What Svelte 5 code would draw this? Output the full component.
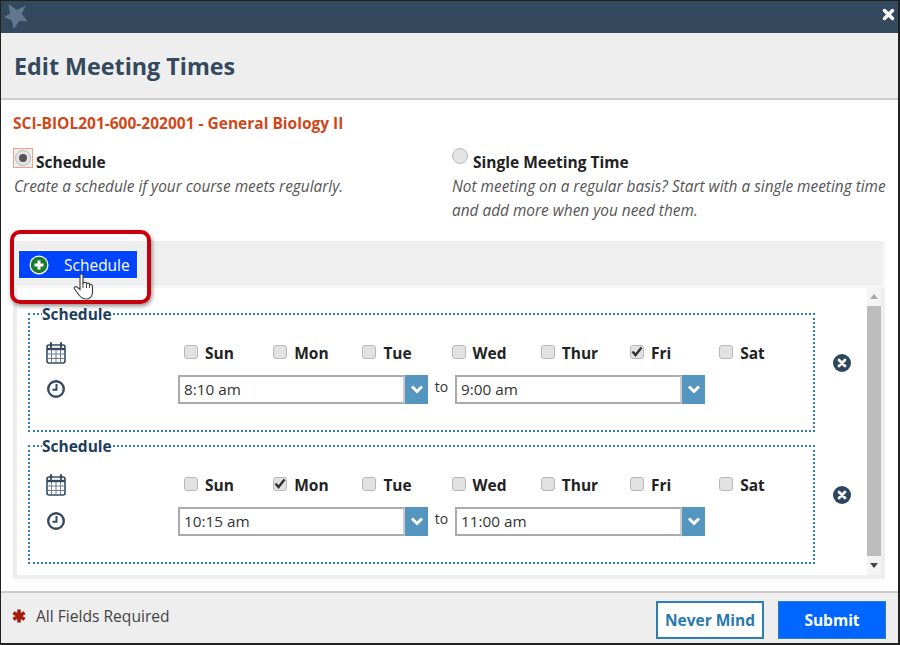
<script>
	const days = ["Sun", "Mon", "Tue", "Wed", "Thur", "Fri", "Sat"];
	const schedules = [
		{ day: "Fri", from: "8:10 am", to: "9:00 am" },
		{ day: "Mon", from: "10:15 am", to: "11:00 am" }
	];
</script>

<div class="frame">
	<div class="topbar">
		<svg class="logo" width="28" height="28" viewBox="0 0 28 28">
			<path d="M7 2 L15 7.500 L23 3.500 L19 11 L25 18 L17 17.500 L12 25 L10 17 L3 14 L8.500 10.500 Z" fill="#64778c" stroke="#64778c" stroke-width="1" stroke-linejoin="round" />
		</svg>
		<svg class="close" width="13" height="13" viewBox="0 0 13 13">
			<path d="M2.5 2.5 L10.5 10.5 M10.5 2.5 L2.5 10.5" stroke="#fff" stroke-width="3.4" stroke-linecap="round" />
		</svg>
	</div>

	<header class="header">
		<h1>Edit Meeting Times</h1>
	</header>

	<main class="content">
		<p class="course">SCI-BIOL201-600-202001 - General Biology II</p>

		<div class="options">
			<div class="option first">
				<div class="option-label">
					<span class="focus-ring"><span class="radio checked"></span></span>
					<b>Schedule</b>
				</div>
				<p class="hint">Create a schedule if your course meets regularly.</p>
			</div>
			<div class="option second">
				<div class="option-label">
					<span class="radio"></span>
					<b>Single Meeting Time</b>
				</div>
				<p class="hint">Not meeting on a regular basis? Start with a single meeting time<br />and add more when you need them.</p>
			</div>
		</div>

		<div class="toolbar">
			<button class="add">
				<svg width="20" height="20" viewBox="0 0 20 20">
					<circle cx="10" cy="10" r="9.500" fill="#fff" />
					<circle cx="10" cy="10" r="8.300" fill="#1c7a2c" />
					<path d="M10 5.500 V14.500 M5.500 10 H14.500" stroke="#fff" stroke-width="3" />
				</svg>
				<span>Schedule</span>
			</button>
		</div>

		<div class="list">
			<div class="rows">
				{#each schedules as s}
					<div class="row">
						<fieldset>
							<legend>Schedule</legend>
							<div class="line days-line">
								<svg class="icon" width="20" height="22" viewBox="0 0 20 22">
									<rect x="1" y="3" width="18" height="18" rx="2" fill="#fff" stroke="#34495e" stroke-width="1.6" />
									<path d="M1 7 H19" stroke="#34495e" stroke-width="2.400" />
									<path d="M1 12 H19 M1 16.500 H19 M5.500 8 V21 M10 8 V21 M14.500 8 V21" stroke="#6a7d92" stroke-width="1" />
									<path d="M5 1 V5 M15 1 V5" stroke="#34495e" stroke-width="2" stroke-linecap="round" />
								</svg>
								<div class="days">
									{#each days as d}
										<div class="day">
											<span class="check">
												{#if d === s.day}
													<svg width="12" height="11" viewBox="0 0 12 11">
														<path d="M1.500 5.500 L4.500 9 L10.500 1.500" fill="none" stroke="#333" stroke-width="2.400" />
													</svg>
												{/if}
											</span>
											<b>{d}</b>
										</div>
									{/each}
								</div>
							</div>
							<div class="line time-line">
								<svg class="icon" width="20" height="20" viewBox="0 0 20 20">
									<circle cx="10" cy="10" r="7.800" fill="#fff" stroke="#34495e" stroke-width="2.400" />
									<path d="M10.500 5 V10.800 H6.500" fill="none" stroke="#34495e" stroke-width="2" />
								</svg>
								<div class="times">
									<div class="select">
										<span class="value">{s.from}</span>
										<span class="arrow">
											<svg width="14" height="10" viewBox="0 0 14 10">
												<path d="M2 2.500 L7 7.500 L12 2.500" fill="none" stroke="#fff" stroke-width="3" />
											</svg>
										</span>
									</div>
									<span class="to">to</span>
									<div class="select">
										<span class="value">{s.to}</span>
										<span class="arrow">
											<svg width="14" height="10" viewBox="0 0 14 10">
												<path d="M2 2.500 L7 7.500 L12 2.500" fill="none" stroke="#fff" stroke-width="3" />
											</svg>
										</span>
									</div>
								</div>
							</div>
						</fieldset>
						<svg class="remove" width="18" height="18" viewBox="0 0 18 18">
							<circle cx="9" cy="9" r="9" fill="#2c4560" />
							<path d="M6 6 L12 12 M12 6 L6 12" stroke="#fff" stroke-width="2.800" stroke-linecap="round" />
						</svg>
					</div>
				{/each}
			</div>
			<div class="scrollbar">
				<span class="up"></span>
				<span class="thumb"></span>
				<span class="down"></span>
			</div>
		</div>

		<div class="highlight"></div>
		<svg class="cursor" width="22" height="27" viewBox="0 0 22 27">
			<path d="M7 2 C7 0.500 10 0.500 10 2 V10 C11 9 13 9 13.500 10.500 C14.500 9.800 16 10 16.500 11.500 C17.500 11 19.500 11.500 19.500 13.500 V19 C19.500 23 17 26 13 26 C9 26 7.500 24 6 22 L1.500 16 C0.500 14.500 2.500 13 4 14 L7 16.500 Z" fill="#fff" stroke="#444" stroke-width="1.200" />
			<path d="M10 10 V15 M13.500 10.500 V15 M16.500 11.500 V15" stroke="#444" stroke-width="1" />
		</svg>
	</main>

	<footer class="footer">
		<div class="required">
			<svg width="14" height="14" viewBox="0 0 14 14">
				<path d="M7 0.500 V13.500 M1.400 3.800 L12.600 10.200 M12.600 3.800 L1.400 10.200" stroke="#a51c10" stroke-width="3.600" />
			</svg>
			<span>All Fields Required</span>
		</div>
		<div class="actions">
			<button class="cancel">Never Mind</button>
			<button class="submit">Submit</button>
		</div>
	</footer>
</div>

<style>
	:global(body) {
		margin: 0;
		background: #fff;
	}

	.frame {
		width: 900px;
		height: 645px;
		box-sizing: border-box;
		border: 1px solid #222;
		border-right-width: 2px;
		border-bottom-width: 2px;
		display: flex;
		flex-direction: column;
		font-family: "Open Sans", sans-serif;
		color: #222;
		overflow: hidden;
	}

	.topbar {
		height: 32px;
		flex: none;
		background: #34495e;
		display: flex;
		align-items: center;
		justify-content: space-between;
		padding: 0 3px 0 1px;
	}

	.close {
		margin-top: -6px;
	}

	.header {
		height: 65px;
		flex: none;
		background: #eeeeee;
		border-bottom: 2px solid #cccccc;
		display: flex;
		align-items: center;
		padding-left: 13px;
	}

	h1 {
		margin: 0;
		font-size: 23.300px;
		font-weight: 700;
		color: #34495e;
	}

	.content {
		flex: 1;
		position: relative;
		padding: 0 13px 0 12px;
		min-height: 0;
	}

	.course {
		margin: 13px 0 0;
		font-size: 15.500px;
		line-height: 20px;
		font-weight: 700;
		color: #d0481a;
		height: 20px;
	}

	.options {
		display: flex;
		margin-top: 15px;
	}

	.option.first {
		width: 439px;
		flex: none;
	}

	.option.first .hint {
		margin-left: 1px;
	}

	.option.second {
		flex: 1;
		white-space: nowrap;
	}

	.option-label {
		display: flex;
		align-items: flex-start;
		height: 24px;
	}

	.option-label b {
		font-size: 15.500px;
		font-weight: 700;
		line-height: 24px;
		margin-top: 2px;
		color: #222;
	}

	.focus-ring {
		width: 20px;
		height: 20px;
		box-sizing: border-box;
		border: 1px solid #e8a48a;
		background: #eee;
		display: flex;
		align-items: center;
		justify-content: center;
		margin-right: 3px;
	}

	.radio {
		width: 16px;
		height: 16px;
		box-sizing: border-box;
		border-radius: 50%;
		background: #e4e4e4;
		border: 1px solid #bbb;
		display: block;
		flex: none;
		position: relative;
		margin-right: 5px;
	}

	.focus-ring .radio {
		margin: 0;
	}

	.radio.checked::after {
		content: "";
		position: absolute;
		left: 3px;
		top: 3px;
		width: 8px;
		height: 8px;
		border-radius: 50%;
		background: #555;
	}

	.hint {
		margin: 3px 0 0;
		font-size: 15.400px;
		line-height: 24px;
		font-style: italic;
		color: #555;
	}

	.toolbar {
		margin-top: 18px;
		height: 41px;
		background: #efefef;
		border: 3px solid #f5f5f5;
		border-top-color: #eee;
		display: flex;
		align-items: center;
		padding-left: 4px;
	}

	.add {
		width: 120px;
		height: 29px;
		border: 1px solid #fff;
		background: #0044ff;
		color: #fff;
		font-family: inherit;
		font-size: 15.500px;
		display: flex;
		align-items: center;
		padding: 0 0 0 10px;
		margin-left: -2px;
	}

	.add span {
		margin-left: 15px;
	}

	.list {
		height: 291px;
		box-sizing: border-box;
		border: 4px solid #eeeeee;
		border-top: none;
		display: flex;
		background: #fff;
	}

	.rows {
		flex: 1;
		padding: 17px 0 0 11px;
		min-width: 0;
	}

	.row {
		display: flex;
		align-items: flex-start;
		height: 132px;
	}

	fieldset {
		width: 787px;
		height: 127px;
		margin: 0;
		box-sizing: border-box;
		border: 2px dotted #2f7fb5;
		padding: 0 0 0 16px;
		min-inline-size: 0;
	}

	legend {
		padding: 0;
		margin-left: -4px;
		font-size: 15.500px;
		line-height: 18px;
		font-weight: 700;
		color: #1d3d5c;
	}

	.line {
		display: flex;
		align-items: center;
	}

	.days-line {
		margin-top: 15px;
		height: 30px;
	}

	.time-line {
		margin-top: 6px;
		height: 30px;
	}

	.icon {
		flex: none;
		width: 20px;
	}

	.days {
		display: grid;
		grid-template-columns: repeat(7, 89.200px);
		margin-left: 118px;
	}

	.day {
		display: flex;
		align-items: center;
	}

	.day b {
		font-size: 15.500px;
		font-weight: 700;
		margin-left: 7px;
		color: #222;
	}

	.check {
		width: 14px;
		height: 14px;
		box-sizing: border-box;
		background: #e2e2e2;
		border: 1px solid #b8b8b8;
		border-radius: 3px;
		display: flex;
		align-items: center;
		justify-content: center;
		margin-top: -3px;
	}

	.times {
		display: flex;
		align-items: center;
		margin-left: 112px;
	}

	.select {
		display: flex;
		height: 29px;
		width: 250px;
	}

	.value {
		flex: 1;
		box-sizing: border-box;
		border: 2px solid #aaa;
		border-right-color: #ccc;
		background: #fff;
		font-size: 15.300px;
		line-height: 25px;
		padding-left: 4px;
		color: #333;
	}

	.arrow {
		width: 23px;
		background: #5596c0;
		display: flex;
		align-items: center;
		justify-content: center;
	}

	.to {
		width: 27px;
		text-align: center;
		font-size: 14px;
		margin-top: -5px;
		color: #333;
	}

	.remove {
		margin: 49px 0 0 18px;
		flex: none;
	}

	.scrollbar {
		width: 14px;
		flex: none;
		display: flex;
		flex-direction: column;
		align-items: center;
		background: #f4f4f4;
	}

	.up {
		margin-top: 6px;
		border: 4px solid transparent;
		border-top: none;
		border-bottom: 5px solid #aaa;
	}

	.thumb {
		width: 14px;
		height: 250px;
		margin-top: 7px;
		background: #bdbdbd;
	}

	.down {
		margin-top: 7px;
		border: 4px solid transparent;
		border-bottom: none;
		border-top: 5px solid #444;
	}

	.highlight {
		position: absolute;
		left: 9px;
		top: 130px;
		width: 141px;
		height: 74px;
		box-sizing: border-box;
		border: 4px solid #c8000c;
		border-radius: 10px;
		box-shadow: 1px 2px 4px rgba(0, 0, 0, 0.45);
		pointer-events: none;
	}

	.cursor {
		position: absolute;
		left: 72px;
		top: 173px;
	}

	.footer {
		height: 50px;
		flex: none;
		background: #eeeeee;
		border-top: 2px solid #cccccc;
		display: flex;
		align-items: center;
		justify-content: space-between;
		padding: 0 12px 0 11px;
	}

	.required {
		display: flex;
		align-items: center;
		font-size: 15.600px;
		color: #444;
		margin-bottom: 4px;
	}

	.required span {
		margin-left: 10px;
	}

	.actions {
		display: flex;
		gap: 14px;
		margin-top: 4px;
	}

	.actions button {
		height: 38px;
		box-sizing: border-box;
		font-family: inherit;
		font-size: 15.500px;
		font-weight: 700;
		padding: 0;
	}

	.cancel {
		width: 108px;
		background: #fff;
		color: #2a78ad;
		border: 2px solid #2f7fb5;
	}

	.submit {
		width: 108px;
		background: #0066ff;
		color: #fff;
		border: 1px solid #2f7fb5;
	}
</style>
